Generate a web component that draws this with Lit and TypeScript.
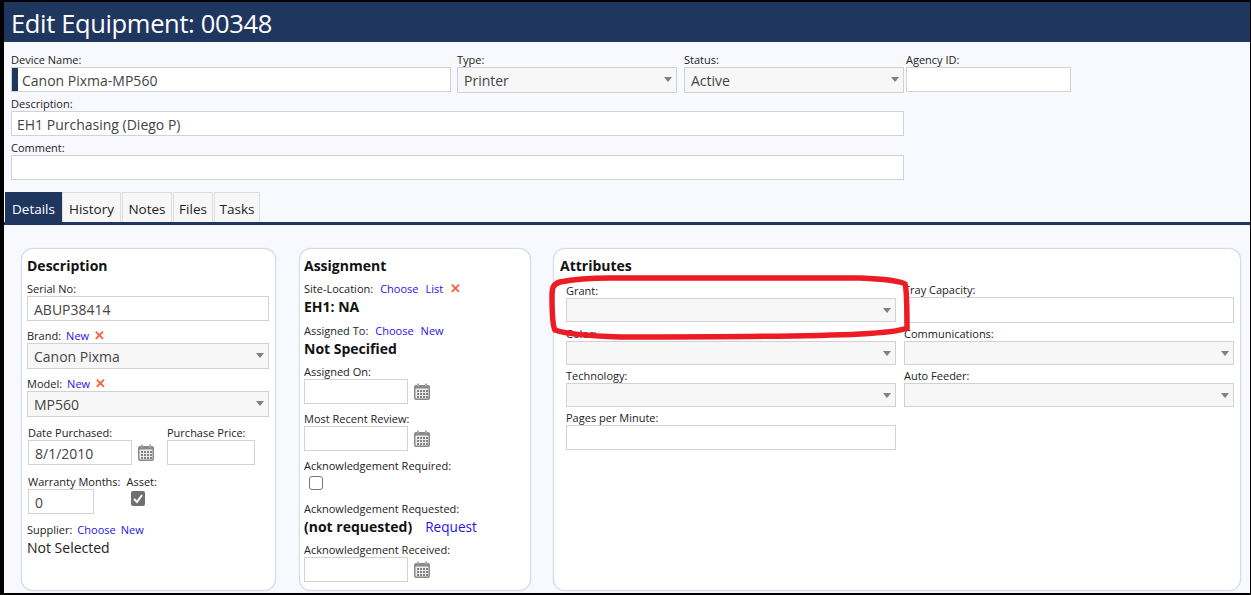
import { LitElement, html, css, svg } from 'lit';
import { customElement } from 'lit/decorators.js';

const caret = html`<span class="caret"></span>`;

const calendar = html`<svg class="cal" width="16" height="18" viewBox="0 0 16 18">
  <path d="M2 2h12a2 2 0 0 1 2 2v11a2 2 0 0 1-2 2H2a2 2 0 0 1-2-2V4a2 2 0 0 1 2-2z" fill="#8a8a8a"/>
  <rect x="3" y="0.5" width="2" height="3" fill="#a8a8a8"/>
  <rect x="11" y="0.5" width="2" height="3" fill="#a8a8a8"/>
  <rect x="1.5" y="5.5" width="13" height="10" rx="1" fill="#ececec"/>
  ${[7, 10, 13].map((y) =>
    [3, 6, 9, 12].map((x) => svg`<rect x=${x} y=${y} width="2" height="2" fill="#808080"/>`)
  )}
</svg>`;

const oval = 'M552 296 C552 288 553 284 560 282 C575 279 590 278 610 278 L860 278 C885 279 900 281 905 284 C907 290 907 310 907 328 C900 331 880 333 860 334 C800 337 700 337 620 337 C590 336 565 334 555 330 C552 325 552 310 552 296 Z';

const tabs: [string, number][] = [['Details', 57], ['History', 59], ['Notes', 50], ['Files', 40], ['Tasks', 46]];

@customElement('app-root')
export class AppRoot extends LitElement {
  static styles = css`
    :host {
      display: block;
      position: relative;
      width: 1251px;
      height: 595px;
      box-sizing: border-box;
      padding: 2px 1px 2px 4px;
      background: #000;
      overflow: hidden;
      font-family: 'Open Sans', 'Noto Sans', sans-serif;
      color: #222;
    }
    .page { height: 591px; background: #f8f9fe; overflow: hidden; }
    .title {
      height: 40px;
      line-height: 43px;
      padding-left: 7px;
      background: #1f365f;
      color: #fff;
      font-size: 25.5px;
      letter-spacing: -0.35px;
      white-space: nowrap;
    }
    .form { padding: 11px 0 0 7px; }
    .row { display: flex; }
    .lbl { display: block; height: 14px; line-height: 14px; font-size: 11px; color: #222; white-space: nowrap; }
    .lbl a, .lbl i { margin-left: 5px; }
    .lbl.spaced a, .lbl.spaced i { margin-left: 7px; }
    a { color: #2a10e8; text-decoration: none; }
    .x { font-style: normal; color: #f4634a; font-size: 13px; line-height: 12px; font-weight: 600; }
    .box {
      box-sizing: border-box;
      height: 25px;
      line-height: 25px;
      padding-left: 6px;
      border: 1px solid #d2d2d2;
      background: #fff;
      color: #444;
      font-size: 14px;
      white-space: nowrap;
    }
    .sel { position: relative; height: 26px; background: #f7f7f7; }
    .caret {
      position: absolute;
      right: 4px;
      top: 9px;
      border-left: 4.5px solid transparent;
      border-right: 4.5px solid transparent;
      border-top: 5px solid #808080;
    }
    .name { position: relative; padding-left: 10px; width: 440px; }
    .name::before { content: ''; position: absolute; left: 0; top: 0; bottom: 0; width: 6px; background: #1f365f; }
    .type { margin-left: 6px; }
    .status { margin-left: 7px; }
    .agency { margin-left: 2px; }
    .w220 { width: 220px; }
    .w165 { width: 165px; }
    .w88 { width: 88px; }
    .w66 { width: 66px; }
    .wide { width: 893px; padding-left: 5px; }
    .gap4 { margin-top: 4px; }
    .gap5 { margin-top: 5px; }
    .tabs { display: flex; height: 30px; margin: 12px 0 0 1px; }
    .tab {
      box-sizing: border-box;
      text-align: center;
      line-height: 32px;
      margin-right: 1px;
      font-size: 13.5px;
      color: #222;
      background: #f7f7f7;
      border: 1px solid #ddd;
      border-bottom: 0;
    }
    .tab.on { background: #1f365f; color: #fff; border: 0; margin-right: 0; line-height: 34px; }
    .bar { height: 3px; background: #1f365f; }
    .cards { display: flex; gap: 22px; padding: 23px 0 0 17px; }
    .card {
      box-sizing: border-box;
      height: 343px;
      padding: 6px 6px 0;
      background: #fff;
      border: 1px solid #d5dbec;
      border-radius: 12px;
      box-shadow: 0 0 1px #c3cbe0;
    }
    .c1 { width: 255px; padding-left: 5px; }
    .c2 { width: 232px; padding-left: 4px; margin-left: 1px; }
    .c3 { width: 688px; }
    h3 { margin: 0 0 5px; height: 22px; line-height: 22px; font-size: 14px; font-weight: 700; color: #111; }
    .big { height: 20px; margin-top: 1px; line-height: 20px; font-size: 14px; color: #222; white-space: nowrap; }
    .bold { font-weight: 700; color: #111; }
    .m6 { margin-top: 6px; }
    .m7 { margin-top: 7px; }
    .m8 { margin-top: 8px; }
    .m9 { margin-top: 9px; }
    .m10 { margin-top: 10px; }
    .m12 { margin-top: 12px; }
    .in1 { margin-left: 1px; }
    .price { margin-left: 13px; }
    .asset { margin-left: 6px; }
    .dt { display: flex; align-items: center; gap: 6px; }
    .d { width: 104px; }
    .cal { flex: none; }
    .chk { display: block; margin: 2px 0 0 5px; }
    .ack { display: block; margin: 3px 0 0 5px; }
    .req { margin-left: 13px; font-weight: 400; font-size: 13.6px; }
    .cols { display: flex; gap: 8px; padding-left: 6px; }
    .col { width: 330px; }
    .col .lbl { margin-top: 4px; }
    .col .box { height: 24px; }
    .col .grant { margin-top: 2px; }
    .col .tray { margin-top: 1px; }
    .col .after { margin-top: 5px; }
    .col .tall { height: 26px; }
    .col .pages { height: 25px; }
    .ring { position: absolute; left: 0; top: 0; pointer-events: none; }
  `;

  render() {
    return html`
      <div class="page">
        <div class="title">Edit Equipment: 00348</div>
        <div class="form">
          <div class="row">
            <div>
              <span class="lbl">Device Name:</span>
              <div class="box name">Canon Pixma-MP560</div>
            </div>
            <div class="type">
              <span class="lbl">Type:</span>
              <div class="box sel w220">Printer${caret}</div>
            </div>
            <div class="status">
              <span class="lbl">Status:</span>
              <div class="box sel w220">Active${caret}</div>
            </div>
            <div class="agency">
              <span class="lbl">Agency ID:</span>
              <div class="box w165"></div>
            </div>
          </div>
          <span class="lbl gap4">Description:</span>
          <div class="box wide">EH1 Purchasing (Diego P)</div>
          <span class="lbl gap5">Comment:</span>
          <div class="box wide"></div>
        </div>
        <div class="tabs">
          ${tabs.map(
            ([name, width], i) =>
              html`<div class="tab ${i === 0 ? 'on' : ''}" style="width:${width}px">${name}</div>`
          )}
        </div>
        <div class="bar"></div>
        <div class="cards">
          ${this.renderDescription()} ${this.renderAssignment()} ${this.renderAttributes()}
        </div>
      </div>
      <svg class="ring" width="1251" height="595">
        <path d=${oval} fill="none" stroke="#ed1c24" stroke-width="5.5" />
      </svg>
    `;
  }

  renderDescription() {
    return html`
      <section class="card c1">
        <h3>Description</h3>
        <span class="lbl">Serial No:</span>
        <div class="box">ABUP38414</div>
        <span class="lbl m8">Brand:<a>New</a><i class="x">✕</i></span>
        <div class="box sel">Canon Pixma${caret}</div>
        <span class="lbl m8">Model:<a>New</a><i class="x">✕</i></span>
        <div class="box sel">MP560${caret}</div>
        <div class="row m9 in1">
          <div>
            <span class="lbl">Date Purchased:</span>
            <div class="dt"><div class="box d">8/1/2010</div>${calendar}</div>
          </div>
          <div class="price">
            <span class="lbl">Purchase Price:</span>
            <div class="box w88"></div>
          </div>
        </div>
        <div class="row m10 in1">
          <div>
            <span class="lbl">Warranty Months:</span>
            <div class="box w66">0</div>
          </div>
          <div class="asset">
            <span class="lbl">Asset:</span>
            <svg class="chk" width="14" height="15" viewBox="0 0 14 15">
              <rect width="14" height="15" rx="2" fill="#707070" />
              <path d="M3 8l3 3 5-7" fill="none" stroke="#fff" stroke-width="2" />
            </svg>
          </div>
        </div>
        <span class="lbl m9">Supplier:<a>Choose</a><a>New</a></span>
        <div class="big">Not Selected</div>
      </section>
    `;
  }

  renderAssignment() {
    return html`
      <section class="card c2">
        <h3>Assignment</h3>
        <span class="lbl spaced">Site-Location:<a>Choose</a><a>List</a><i class="x">✕</i></span>
        <div class="big bold">EH1: NA</div>
        <span class="lbl spaced m7">Assigned To:<a>Choose</a><a>New</a></span>
        <div class="big bold">Not Specified</div>
        <span class="lbl m6">Assigned On:</span>
        <div class="dt"><div class="box d"></div>${calendar}</div>
        <span class="lbl m8">Most Recent Review:</span>
        <div class="dt"><div class="box d"></div>${calendar}</div>
        <span class="lbl m8">Acknowledgement Required:</span>
        <svg class="ack" width="14" height="14" viewBox="0 0 14 14">
          <rect x="0.5" y="0.5" width="13" height="13" rx="2.5" fill="#fff" stroke="#777" />
        </svg>
        <span class="lbl m12">Acknowledgement Requested:</span>
        <div class="big bold">(not requested)<a class="req">Request</a></div>
        <span class="lbl m6">Acknowledgement Received:</span>
        <div class="dt"><div class="box d"></div>${calendar}</div>
      </section>
    `;
  }

  renderAttributes() {
    return html`
      <section class="card c3">
        <h3>Attributes</h3>
        <div class="cols">
          <div class="col">
            <span class="lbl grant">Grant:</span>
            <div class="box sel">${caret}</div>
            <span class="lbl after">Color:</span>
            <div class="box sel">${caret}</div>
            <span class="lbl">Technology:</span>
            <div class="box sel">${caret}</div>
            <span class="lbl">Pages per Minute:</span>
            <div class="box pages"></div>
          </div>
          <div class="col">
            <span class="lbl tray">Tray Capacity:</span>
            <div class="box tall"></div>
            <span class="lbl">Communications:</span>
            <div class="box sel">${caret}</div>
            <span class="lbl">Auto Feeder:</span>
            <div class="box sel">${caret}</div>
          </div>
        </div>
      </section>
    `;
  }
}
